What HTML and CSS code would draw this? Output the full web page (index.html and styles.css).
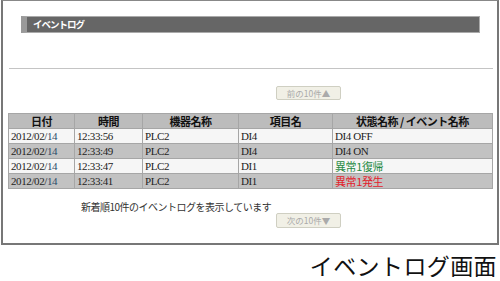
FILE: index.html
```html
<!DOCTYPE html>
<html lang="ja">
<head>
  <meta charset="UTF-8">
  <title>イベントログ画面</title>
  <link rel="stylesheet" href="styles.css">
</head>
<body>

<div class="frame">
  <div class="title-bar"><span class="title-text">イベントログ</span></div>

  <div class="rule"></div>

  <div class="page-btn">前の10件▲</div>

  <table class="log-table">
    <colgroup>
      <col style="width:66px">
      <col style="width:68px">
      <col style="width:96px">
      <col style="width:94px">
      <col>
    </colgroup>
    <tr>
      <th>日付</th>
      <th>時間</th>
      <th>機器名称</th>
      <th>項目名</th>
      <th>状態名称 / イベント名称</th>
    </tr>
    <tr class="odd">
      <td>2012/02/<span class="day">14</span></td>
      <td>12:33:56</td>
      <td>PLC2</td>
      <td>DI4</td>
      <td>DI4 OFF</td>
    </tr>
    <tr class="even">
      <td>2012/02/<span class="day">14</span></td>
      <td>12:33:49</td>
      <td>PLC2</td>
      <td>DI4</td>
      <td>DI4 ON</td>
    </tr>
    <tr class="odd">
      <td>2012/02/<span class="day">14</span></td>
      <td>12:33:47</td>
      <td>PLC2</td>
      <td>DI1</td>
      <td class="ok">異常1復帰</td>
    </tr>
    <tr class="even">
      <td>2012/02/<span class="day">14</span></td>
      <td>12:33:41</td>
      <td>PLC2</td>
      <td>DI1</td>
      <td class="ng">異常1発生</td>
    </tr>
  </table>

  <p class="note">新着順10件のイベントログを表示しています</p>

  <div class="page-btn">次の10件▼</div>
</div>

<div class="caption">イベントログ画面</div>

</body>
</html>
```

FILE: styles.css
```css
body {
  margin: 0;
  background: #fff;
  font-family: "Noto Sans CJK JP", sans-serif;
  color: #222;
}
.frame {
  width: 494px;
  margin-left: 1px;
  border: 2px solid #777;
  border-top: 1px solid #888;
  padding-bottom: 15px;
}
.title-bar {
  margin: 15px 17px 0 18px;
  height: 15px;
  background: #666;
  border: 1px solid #aaa;
  border-left: 6px solid #999;
  display: flex;
  align-items: center;
}
.title-text {
  margin-left: 6px;
  color: #fff;
  font-size: 9.5px;
  font-weight: bold;
  letter-spacing: -1px;
  line-height: 1;
}
.rule {
  margin: 35px 4px 0 6px;
  border-top: 1px solid #c4c4c4;
}
.page-btn {
  width: 63px;
  height: 12px;
  margin: 17px 0 0 273px;
  background: #f1f0e6;
  border: 1px solid #cfcfc2;
  border-radius: 2px;
  color: #aaa;
  font-size: 8.5px;
  line-height: 12px;
  text-align: center;
}
.log-table {
  margin: 13px 0 0 5px;
  width: 485px;
  border-collapse: collapse;
  table-layout: fixed;
  font-family: "Liberation Serif", "Noto Sans CJK JP", serif;
  font-size: 11px;
  letter-spacing: -0.4px;
}
.log-table th,
.log-table td {
  border: 1px solid #a6a6a6;
  height: 14px;
  padding: 0 2px;
  line-height: 14px;
  white-space: nowrap;
  overflow: hidden;
}
.log-table th {
  background: #bcbcbc;
  font-family: "Noto Sans CJK JP", sans-serif;
  font-size: 11px;
  font-weight: bold;
  letter-spacing: -0.5px;
  color: #111;
}
.log-table tr.odd td {
  background: #f6f6f6;
}
.log-table tr.even td {
  background: #c2c2c2;
}
.day {
  color: #2d4d6a;
}
.ok {
  color: #1f8a43;
  font-family: "Noto Sans CJK JP", sans-serif;
}
.ng {
  color: #e3202a;
  font-family: "Noto Sans CJK JP", sans-serif;
}
.note {
  margin: 12px 0 0 78px;
  font-size: 10px;
  line-height: 12px;
  letter-spacing: -0.5px;
  color: #333;
}
.note + .page-btn {
  margin-top: 0;
  height: 13px;
  line-height: 13px;
}
.caption {
  margin: 9px 3px 0 0;
  text-align: right;
  font-size: 23px;
  line-height: 23px;
  letter-spacing: 0.4px;
  color: #111;
}
```
